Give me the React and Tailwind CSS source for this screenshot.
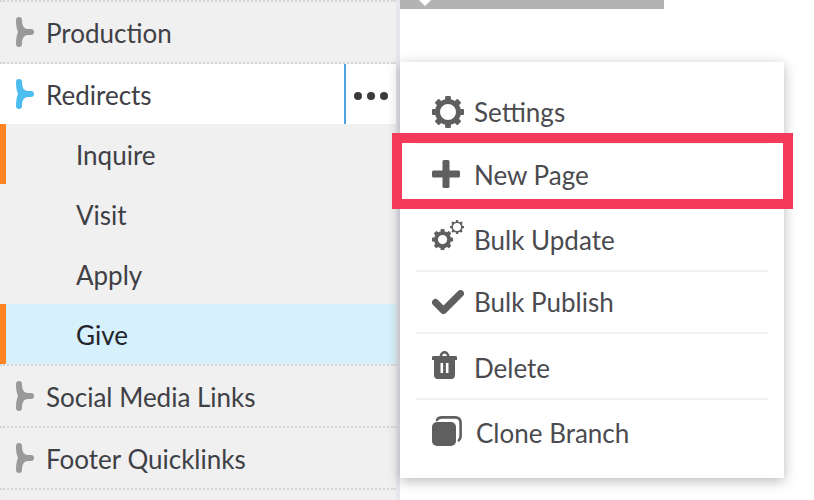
const Branch = ({ color }) => (
  <svg width="18" height="30" viewBox="0 0 18 30" fill={color} className="shrink-0">
    <path d="M0 3A3 3 0 0 1 6 3C6 8 7.5 12 12 12H15A3 3 0 0 1 15 18H12C7.5 18 6 22 6 27A3 3 0 0 1 0 27C0 22 .6 18 2 15C.6 12 0 8 0 3Z" />
  </svg>
);

const teeth = [0, 45, 90, 135, 180, 225, 270, 315];

const Gear = () => (
  <svg width="32" height="32" viewBox="0 0 32 32" fill="none" className="block">
    <circle cx="16" cy="16" r="10.5" stroke="#5f5f5f" strokeWidth="5" />
    {teeth.map((a) => (
      <rect key={a} x="13.1" y="0" width="5.8" height="7" rx="1" fill="#5f5f5f" transform={`rotate(${a} 16 16)`} />
    ))}
  </svg>
);

const Plus = () => (
  <svg width="28" height="28" viewBox="0 0 28 28" fill="#5f5f5f" className="block">
    <rect x="10.5" y="0" width="7" height="28" rx="1.5" />
    <rect x="0" y="10.5" width="28" height="7" rx="1.5" />
  </svg>
);

const BulkGears = () => (
  <svg width="32" height="30" viewBox="0 0 32 30" fill="none" className="block">
    <g transform="translate(0 9) scale(0.66)">
      <circle cx="16" cy="16" r="10" stroke="#5f5f5f" strokeWidth="6" />
      {teeth.map((a) => (
        <rect key={a} x="13" y="0" width="6" height="7.5" rx="1" fill="#5f5f5f" transform={`rotate(${a} 16 16)`} />
      ))}
    </g>
    <g transform="translate(18 0) scale(0.44)">
      <circle cx="16" cy="16" r="11" stroke="#5f5f5f" strokeWidth="3.6" />
      {teeth.map((a) => (
        <rect key={a} x="13.4" y="0" width="5.2" height="6.5" rx="1" fill="#5f5f5f" transform={`rotate(${a} 16 16)`} />
      ))}
    </g>
  </svg>
);

const Check = () => (
  <svg width="32" height="24" viewBox="0 0 32 24" fill="none" stroke="#5f5f5f" strokeWidth="7" strokeLinecap="round" strokeLinejoin="round" className="block">
    <path d="M3.5 12.5L11.5 20.5L28.5 3.5" />
  </svg>
);

const Trash = () => (
  <svg width="25" height="28" viewBox="0 0 25 28" className="block">
    <path fill="#5f5f5f" d="M0 6.5C0 5.5 .5 5 1.5 5H7.5C8 2 9.8 0 12.5 0C15.2 0 17 2 17.5 5H23.5C24.5 5 25 5.5 25 6.5V9H23V24C23 26.5 21.5 28 19.5 28H5.5C3.5 28 2 26.5 2 24V9H0ZM10 5H15C14.7 3.5 13.8 2.5 12.5 2.5C11.2 2.5 10.3 3.5 10 5Z" />
    <rect x="8.5" y="12" width="2.6" height="10" fill="#fff" />
    <rect x="13.9" y="12" width="2.6" height="10" fill="#fff" />
  </svg>
);

const Clone = () => (
  <svg width="30" height="30" viewBox="0 0 30 30" fill="none" className="block">
    <path d="M5 4C6 2 8 1.4 10 1.4H23C26.5 1.4 28.6 3.5 28.6 7V20C28.6 22 28 23.3 26.8 24.4" stroke="#5f5f5f" strokeWidth="2.6" strokeLinecap="round" />
    <rect x="0" y="6" width="24" height="24" rx="5" fill="#5f5f5f" />
  </svg>
);

const Row = ({ label }) => (
  <div className="h-[60px] flex items-center pl-4 border-b-2 border-dotted border-[#d4d4d4] box-content">
    <Branch color="#999999" />
    <span className="ml-3 pt-[2px] text-[#3f4046]">{label}</span>
  </div>
);

const Child = ({ label, mark, selected }) => (
  <div className={`h-[60px] flex items-center border-l-[6px] pl-[70px] ${mark ? "border-[#ff8424]" : "border-transparent"} ${selected ? "bg-[#d6f1fb] text-[#24252b]" : "text-[#3f4046]"}`}>
    <span className="pt-[2px]">{label}</span>
  </div>
);

const Item = ({ icon, label, h, sep = true, textPad = "pt-0", iconPad = "pb-0", textMl = "ml-[58px]" }) => (
  <div className={`${h} relative flex items-center mx-4 ${sep ? "border-b-2 border-[#f1f1f1]" : ""}`}>
    <div className={`absolute left-4 top-0 bottom-0 flex items-center ${iconPad}`}>{icon}</div>
    <span className={`${textMl} ${textPad}`}>{label}</span>
  </div>
);

export default function App() {
  return (
    <div className="w-[814px] h-[500px] overflow-hidden bg-white flex text-[26px] font-['Lato',sans-serif]">
      <aside className="w-[400px] h-full shrink-0 bg-[#f0f0f0] border-r-4 border-[#e6e7ed]">
        <div className="border-t-2 border-dotted border-[#d4d4d4]">
          <Row label="Production" />
          <div className="h-[60px] flex items-center pl-4 bg-white">
            <Branch color="#4cbdee" />
            <span className="ml-3 pt-[2px] text-[#3f4046]">Redirects</span>
            <div className="ml-auto w-[52px] h-full border-l-2 border-[#4da6e3] flex items-center justify-center gap-[5px] pt-1">
              <span className="w-2 h-2 rounded-full bg-[#3a3a3f]" />
              <span className="w-2 h-2 rounded-full bg-[#3a3a3f]" />
              <span className="w-2 h-2 rounded-full bg-[#3a3a3f]" />
            </div>
          </div>
          <Child label="Inquire" mark />
          <Child label="Visit" />
          <Child label="Apply" />
          <div className="border-b-2 border-dotted border-[#d4d4d4]">
            <Child label="Give" mark selected />
          </div>
          <Row label="Social Media Links" />
          <Row label="Footer Quicklinks" />
        </div>
      </aside>

      <main className="relative w-[414px] h-full">
        <div className="relative w-[264px] h-[9px] bg-[#b3b3b3]">
          <span className="absolute left-[20px] -top-[6px] w-[10px] h-[10px] rotate-45 bg-white" />
        </div>
        <div className="w-[384px] h-[416px] mt-[53px] pt-5 bg-white text-[#4b4b4f] shadow-[0_3px_12px_rgba(0,0,0,0.28)]">
          <Item h="h-[62px]" icon={<Gear />} label="Settings" />
          <Item h="h-[62px]" textPad="pt-[2px]" icon={<Plus />} label="New Page" />
          <Item h="h-[66px]" textPad="pt-[4px]" iconPad="pb-[6px]" icon={<BulkGears />} label="Bulk Update" />
          <Item h="h-[62px]" icon={<Check />} label="Bulk Publish" />
          <Item h="h-[66px]" textPad="pt-[4px]" iconPad="pb-[2px]" icon={<Trash />} label="Delete" />
          <Item h="h-[66px]" sep={false} textMl="ml-[60px]" iconPad="pb-[4px]" icon={<Clone />} label="Clone Branch" />
        </div>
        <div className="absolute left-[-8px] top-[133px] w-[401px] h-[76px] border-[10px] border-[#f43a5a]" />
      </main>
    </div>
  );
}
